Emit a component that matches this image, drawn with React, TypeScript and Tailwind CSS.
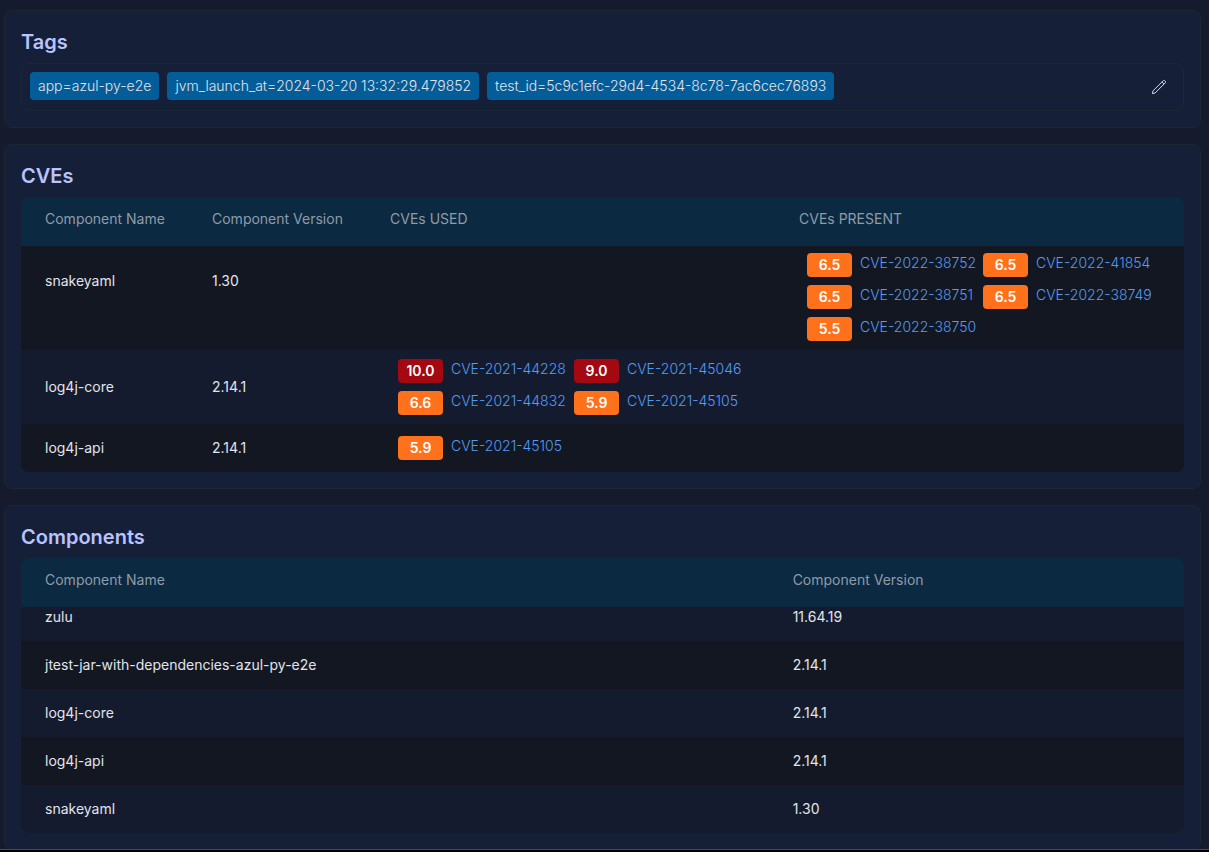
import React, { ReactNode, useLayoutEffect, useRef } from 'react';

interface Cve {
  id: string;
  score: number;
}

interface CveRow {
  name: string;
  version: string;
  used: Cve[];
  present: Cve[];
}

const tags = [
  'app=azul-py-e2e',
  'jvm_launch_at=2024-03-20 13:32:29.479852',
  'test_id=5c9c1efc-29d4-4534-8c78-7ac6cec76893',
];

const cveRows: CveRow[] = [
  {
    name: 'snakeyaml',
    version: '1.30',
    used: [],
    present: [
      { id: 'CVE-2022-38752', score: 6.5 },
      { id: 'CVE-2022-41854', score: 6.5 },
      { id: 'CVE-2022-38751', score: 6.5 },
      { id: 'CVE-2022-38749', score: 6.5 },
      { id: 'CVE-2022-38750', score: 5.5 },
    ],
  },
  {
    name: 'log4j-core',
    version: '2.14.1',
    used: [
      { id: 'CVE-2021-44228', score: 10 },
      { id: 'CVE-2021-45046', score: 9 },
      { id: 'CVE-2021-44832', score: 6.6 },
      { id: 'CVE-2021-45105', score: 5.9 },
    ],
    present: [],
  },
  {
    name: 'log4j-api',
    version: '2.14.1',
    used: [{ id: 'CVE-2021-45105', score: 5.9 }],
    present: [],
  },
];

const components = [
  { name: 'zulu', version: '11.64.19' },
  { name: 'jtest-jar-with-dependencies-azul-py-e2e', version: '2.14.1' },
  { name: 'log4j-core', version: '2.14.1' },
  { name: 'log4j-api', version: '2.14.1' },
  { name: 'snakeyaml', version: '1.30' },
];

function Card({ title, children }: { title: string; children: ReactNode }) {
  return (
    <section className="rounded-lg border border-[#1b2733] bg-[#151f38] p-4">
      <h2 className="mb-1.5 text-xl leading-[30px] font-semibold text-[#b9c3ff]">{title}</h2>
      {children}
    </section>
  );
}

// Scrollable table body, opened at the last rows
function TableScroller({ children }: { children: ReactNode }) {
  const ref = useRef<HTMLDivElement>(null);

  useLayoutEffect(() => {
    if (ref.current) {
      ref.current.scrollTop = ref.current.scrollHeight;
    }
  }, []);

  return (
    <div ref={ref} className="max-h-[275px] overflow-y-auto rounded-lg [scrollbar-width:none]">
      {children}
    </div>
  );
}

function Th({ className = '', children }: { className?: string; children: ReactNode }) {
  return (
    <th
      scope="col"
      className={`sticky top-0 z-10 h-[49px] bg-[#0b2940] px-6 pt-3 text-left align-top font-normal text-[#8f9ba8] ${className}`}
    >
      {children}
    </th>
  );
}

function CveList({ cves }: { cves: Cve[] }) {
  return (
    <ul className="grid grid-cols-[168px_168px] gap-2 pl-2">
      {cves.map((cve) => (
        <li key={cve.id} className="flex items-start gap-2">
          <span
            className={`w-[45px] shrink-0 rounded text-center leading-6 font-semibold text-white ${
              cve.score >= 9 ? 'bg-[#a40811]' : 'bg-[#ff711a]'
            }`}
          >
            {cve.score.toFixed(1)}
          </span>
          <a href={`#${cve.id}`} className="font-light whitespace-nowrap text-[#539bf5]">
            {cve.id}
          </a>
        </li>
      ))}
    </ul>
  );
}

export default function App() {
  return (
    <div className="min-h-screen bg-[#151a2d] font-['Inter',sans-serif] text-sm text-[#e1e4ea]">
      <main className="flex flex-col gap-4 pt-2.5 pr-2 pl-1">
        <Card title="Tags">
          <div className="flex items-start gap-2 rounded-lg border border-[#1b2733] p-2">
            <ul className="flex flex-1 flex-wrap gap-2">
              {tags.map((tag) => (
                <li key={tag} className="rounded bg-[#045d98] px-2 leading-7 font-light">
                  {tag}
                </li>
              ))}
            </ul>
            <button type="button" aria-label="Edit tags" className="flex h-[30px] w-8 items-center justify-center">
              <svg className="h-4 w-4" viewBox="0 0 16 16" fill="none" stroke="#d5d9e2" strokeLinejoin="round">
                <path d="M1.4 14.6l.6-2.7L12.2 1.7c.5-.5 1.2-.5 1.6 0l.5.5c.5.4.5 1.1 0 1.6L4.1 14z" />
                <path d="M11 2.9l2.1 2.1" />
              </svg>
            </button>
          </div>
        </Card>

        <Card title="CVEs">
          <TableScroller>
            <table className="w-full table-fixed">
              <thead>
                <tr>
                  <Th className="w-[167px] whitespace-nowrap">Component Name</Th>
                  <Th className="w-[178px] whitespace-nowrap">Component Version</Th>
                  <Th>CVEs USED</Th>
                  <Th>CVEs PRESENT</Th>
                </tr>
              </thead>
              <tbody>
                {cveRows.map((row) => (
                  <tr key={row.name} className="h-12 odd:bg-[#131722] even:bg-[#151b2f] first:h-[138px]">
                    <td className="px-6">{row.name}</td>
                    <td className="px-6">{row.version}</td>
                    <td className="py-[9px] pl-6">
                      <CveList cves={row.used} />
                    </td>
                    <td className="py-[9px] pl-6 align-bottom">
                      <CveList cves={row.present} />
                    </td>
                  </tr>
                ))}
              </tbody>
            </table>
          </TableScroller>
        </Card>

        <Card title="Components">
          <TableScroller>
            <table className="w-full table-fixed">
              <thead>
                <tr>
                  <Th className="w-9/14">Component Name</Th>
                  <Th>Component Version</Th>
                </tr>
              </thead>
              <tbody>
                {components.map((component) => (
                  <tr key={component.name} className="h-12 odd:bg-[#151b2f] even:bg-[#131722]">
                    <td className="px-6">{component.name}</td>
                    <td className="px-6">{component.version}</td>
                  </tr>
                ))}
              </tbody>
            </table>
          </TableScroller>
        </Card>
      </main>

      <footer className="fixed inset-x-0 bottom-0 h-[3px] border-t border-[#4a4d57] bg-black" />
    </div>
  );
}
